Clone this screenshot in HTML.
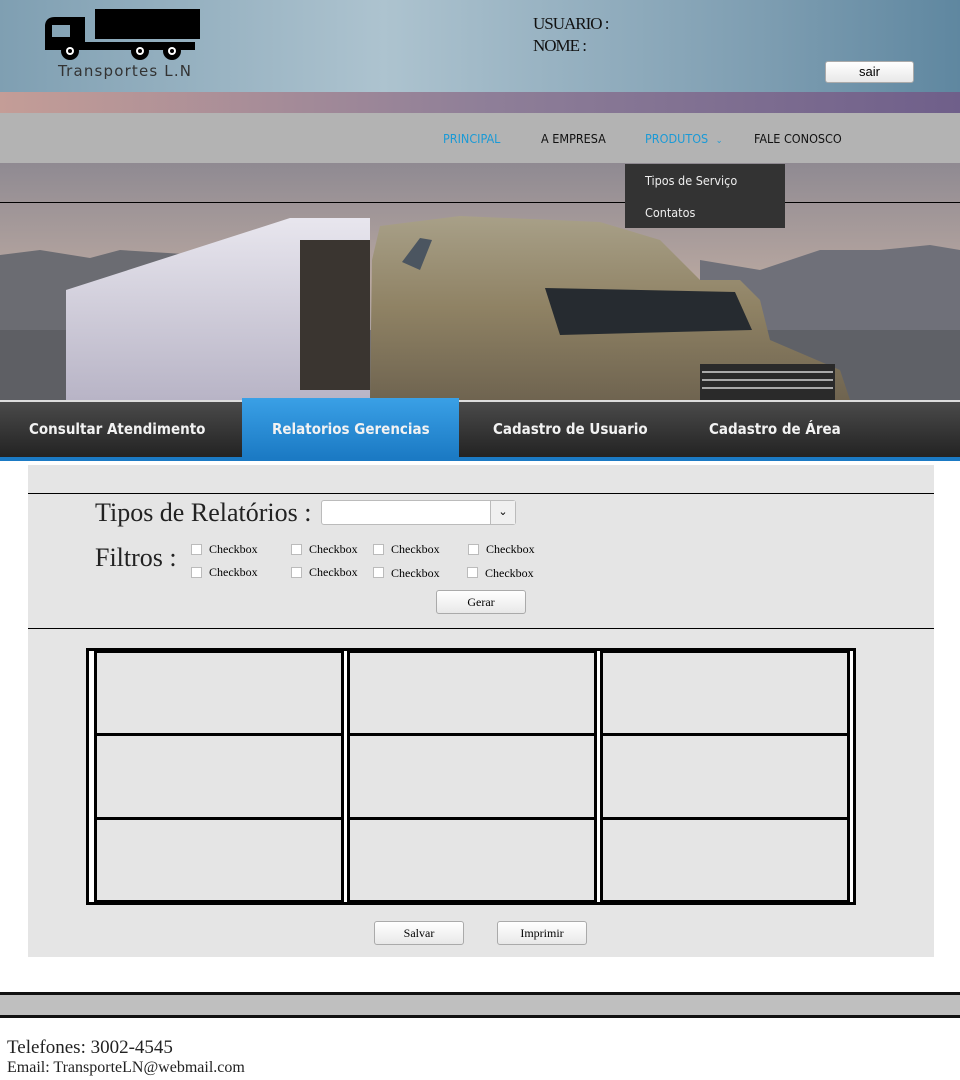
<!DOCTYPE html>
<html><head><meta charset="utf-8"><style>
*{margin:0;padding:0;box-sizing:border-box}
body{width:960px;height:1080px;position:relative;background:#fff;font-family:"Liberation Sans",sans-serif;overflow:hidden}
.a{position:absolute}
.nav{font-family:"DejaVu Sans Condensed","Liberation Sans",sans-serif;font-size:12.5px}
.tab{color:#f2f2f2;font-family:"DejaVu Sans Condensed","Liberation Sans",sans-serif;font-weight:bold;font-size:15px;top:420px}
.ser{font-family:"Liberation Serif",serif}
.cb{width:11px;height:11px;border:1px solid #bbb;background:#fff}
.cbl{font-family:"Liberation Serif",serif;font-size:12px;color:#000}
.btn{border:1px solid #aaa;border-radius:3px;background:linear-gradient(#fff,#e8e8e8);font-family:"Liberation Serif",serif;font-size:12px;text-align:center;line-height:22px;height:24px}
.cell{position:absolute;border:3px solid #000;background:#e5e5e5}
</style></head><body>
<svg class="a" style="left:0;top:0" width="960" height="400">
<defs>
<linearGradient id="sky" x1="0" y1="0" x2="1" y2="0"><stop offset="0" stop-color="#7f9fb2"/><stop offset=".4" stop-color="#adc3cf"/><stop offset=".8" stop-color="#7d9db1"/><stop offset="1" stop-color="#5f87a0"/></linearGradient>
<linearGradient id="band" x1="0" y1="0" x2="1" y2="0"><stop offset="0" stop-color="#c49d97"/><stop offset=".5" stop-color="#8f7f98"/><stop offset="1" stop-color="#6f5f8a"/></linearGradient>
<linearGradient id="sky2" x1="0" y1="0" x2="0" y2="1"><stop offset="0" stop-color="#8f8a92"/><stop offset=".5" stop-color="#b8a7a0"/><stop offset="1" stop-color="#9a9aa4"/></linearGradient>
<linearGradient id="cab" x1="0" y1="0" x2="0" y2="1"><stop offset="0" stop-color="#a8a088"/><stop offset=".5" stop-color="#8f8264"/><stop offset="1" stop-color="#6f6450"/></linearGradient>
<linearGradient id="trl" x1="0" y1="0" x2="0" y2="1"><stop offset="0" stop-color="#e8e6ee"/><stop offset="1" stop-color="#b8b4c6"/></linearGradient>
</defs>
<rect width="960" height="92" fill="url(#sky)"/>
<rect y="92" width="960" height="21" fill="url(#band)"/>
<rect y="163" width="960" height="237" fill="url(#sky2)"/>
<polygon points="0,255 40,250 90,258 120,250 200,255 300,290 300,400 0,400" fill="#6b6c72"/>
<polygon points="700,260 760,270 820,250 880,250 930,245 960,250 960,400 700,400" fill="#6f7079"/>
<polygon points="0,330 960,330 960,400 0,400" fill="#55565c" opacity=".6"/>
<polygon points="66,290 290,218 370,218 370,400 66,400" fill="url(#trl)"/>
<rect x="300" y="240" width="70" height="150" fill="#3a3530"/>
<polygon points="380,226 460,216 600,222 660,240 700,280 740,280 760,300 770,340 840,370 850,400 370,400 372,260" fill="url(#cab)"/>
<polygon points="545,288 735,292 752,330 560,335" fill="#262b30"/>
<polygon points="402,262 420,238 432,240 420,270" fill="#4b5560"/>
<rect x="700" y="364" width="135" height="36" fill="#2a2a2a"/>
<g stroke="#aaa" stroke-width="2"><line x1="702" y1="372" x2="833" y2="372"/><line x1="702" y1="380" x2="833" y2="380"/><line x1="702" y1="388" x2="833" y2="388"/></g>
<line x1="0" y1="202.5" x2="960" y2="202.5" stroke="#000" stroke-width="1"/>
<rect x="95" y="9" width="105" height="30" fill="#000"/>
<path d="M45 48 L45 25 Q46 17 55 17 L85 17 L85 49 Z M52 25 L52 37 L70 37 L70 25 Z" fill="#000" fill-rule="evenodd"/>
<rect x="45" y="42" width="150" height="8" fill="#000"/>
<g fill="#000"><circle cx="70" cy="51" r="9"/><circle cx="140" cy="51" r="9"/><circle cx="172" cy="51" r="9"/></g>
<g fill="#fff"><circle cx="70" cy="51" r="4"/><circle cx="140" cy="51" r="4"/><circle cx="172" cy="51" r="4"/></g>
<g fill="#000"><circle cx="70" cy="51" r="2"/><circle cx="140" cy="51" r="2"/><circle cx="172" cy="51" r="2"/></g>
<text x="58" y="76" font-family="DejaVu Sans" font-size="15" fill="#333" textLength="133">Transportes L.N</text>
</svg>
<div class="a ser" style="left:533px;top:13px;font-size:17px;line-height:22px;color:#111;letter-spacing:-1px">USUARIO :<br>NOME :</div>
<div class="a btn" style="left:825px;top:61px;width:89px;height:22px;line-height:20px;font-family:'Liberation Sans';font-size:13px">sair</div>
<div class="a" style="left:0;top:113px;width:960px;height:50px;background:#b3b3b3"></div>
<div class="a nav" style="left:443px;top:131px;color:#1a9ad6">PRINCIPAL</div>
<div class="a nav" style="left:541px;top:131px;color:#111">A EMPRESA</div>
<div class="a nav" style="left:645px;top:131px;color:#1a9ad6">PRODUTOS <span style="font-size:9px;margin-left:4px">⌄</span></div>
<div class="a nav" style="left:754px;top:131px;color:#111">FALE CONOSCO</div>
<div class="a" style="left:625px;top:164px;width:160px;height:64px;background:#333"></div>
<div class="a nav" style="left:645px;top:173px;color:#eee">Tipos de Serviço</div>
<div class="a nav" style="left:645px;top:205px;color:#eee">Contatos</div>
<div class="a" style="left:0;top:400px;width:960px;height:2px;background:#ddd"></div>
<div class="a" style="left:0;top:402px;width:960px;height:56px;background:linear-gradient(#4a4a4a,#222)"></div>
<div class="a" style="left:242px;top:398px;width:217px;height:60px;background:linear-gradient(#3aa0e6,#1b7ac4)"></div>
<div class="a" style="left:0;top:457px;width:960px;height:4px;background:#1b7ac4"></div>
<div class="a tab" style="left:29px">Consultar Atendimento</div>
<div class="a tab" style="left:272px">Relatorios Gerencias</div>
<div class="a tab" style="left:493px">Cadastro de Usuario</div>
<div class="a tab" style="left:709px">Cadastro de Área</div>
<div class="a" style="left:28px;top:465px;width:906px;height:492px;background:#e5e5e5"></div>
<div class="a" style="left:28px;top:493px;width:906px;height:1px;background:#000"></div>
<div class="a" style="left:28px;top:628px;width:906px;height:1px;background:#000"></div>
<div class="a ser" style="left:95px;top:498px;font-size:26px;color:#222">Tipos de Relatórios :</div>
<div class="a" style="left:321px;top:500px;width:195px;height:25px;background:#fff;border:1px solid #bbb;border-radius:3px"></div>
<div class="a" style="left:490px;top:501px;width:25px;height:23px;border-left:1px solid #bbb;background:#f0f0f0;text-align:center;font-size:11px;line-height:22px">⌄</div>
<div class="a ser" style="left:95px;top:543px;font-size:26px;color:#222">Filtros :</div>
<div class="a cb" style="left:191px;top:544px"></div><div class="a cbl" style="left:209px;top:542px">Checkbox</div>
<div class="a cb" style="left:291px;top:544px"></div><div class="a cbl" style="left:309px;top:542px">Checkbox</div>
<div class="a cb" style="left:373px;top:544px"></div><div class="a cbl" style="left:391px;top:542px">Checkbox</div>
<div class="a cb" style="left:468px;top:544px"></div><div class="a cbl" style="left:486px;top:542px">Checkbox</div>
<div class="a cb" style="left:191px;top:567px"></div><div class="a cbl" style="left:209px;top:565px">Checkbox</div>
<div class="a cb" style="left:291px;top:567px"></div><div class="a cbl" style="left:309px;top:565px">Checkbox</div>
<div class="a cb" style="left:373px;top:567px"></div><div class="a cbl" style="left:391px;top:566px">Checkbox</div>
<div class="a cb" style="left:467px;top:567px"></div><div class="a cbl" style="left:485px;top:566px">Checkbox</div>
<div class="a btn" style="left:436px;top:590px;width:90px">Gerar</div>
<div class="a" style="left:86px;top:648px;width:770px;height:257px;border:3px solid #000;background:#fff"></div>
<div class="cell" style="left:94px;top:650px;width:250px;height:86px"></div>
<div class="cell" style="left:347px;top:650px;width:250px;height:86px"></div>
<div class="cell" style="left:600px;top:650px;width:250px;height:86px"></div>
<div class="cell" style="left:94px;top:733px;width:250px;height:87px"></div>
<div class="cell" style="left:347px;top:733px;width:250px;height:87px"></div>
<div class="cell" style="left:600px;top:733px;width:250px;height:87px"></div>
<div class="cell" style="left:94px;top:817px;width:250px;height:86px"></div>
<div class="cell" style="left:347px;top:817px;width:250px;height:86px"></div>
<div class="cell" style="left:600px;top:817px;width:250px;height:86px"></div>
<div class="a btn" style="left:374px;top:921px;width:90px">Salvar</div>
<div class="a btn" style="left:497px;top:921px;width:90px">Imprimir</div>
<div class="a" style="left:0;top:992px;width:960px;height:26px;background:#bfbfbf;border-top:3px solid #111;border-bottom:3px solid #111"></div>
<div class="a ser" style="left:7px;top:1037px;font-size:19px;color:#222">Telefones: 3002-4545</div>
<div class="a ser" style="left:7px;top:1059px;font-size:16px;color:#222">Email: TransporteLN@webmail.com</div>
</body></html>
